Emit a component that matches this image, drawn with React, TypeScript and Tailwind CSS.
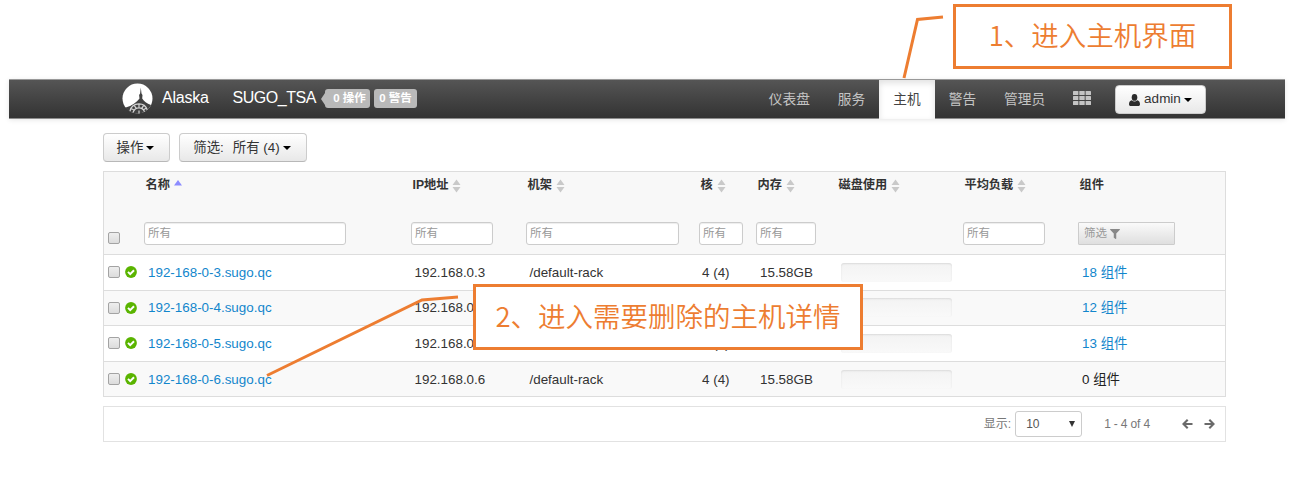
import React from "react";
import { FaFilter } from "react-icons/fa";

const hosts = [
  { name: "192-168-0-3.sugo.qc", ip: "192.168.0.3", count: 18 },
  { name: "192-168-0-4.sugo.qc", ip: "192.168.0.4", count: 12 },
  { name: "192-168-0-5.sugo.qc", ip: "192.168.0.5", count: 13 },
  { name: "192-168-0-6.sugo.qc", ip: "192.168.0.6", count: 0 },
];

const columns = [
  { label: "名称", input: "w-[202px]" },
  { label: "IP地址", input: "w-[82px]" },
  { label: "机架", input: "w-[153px]" },
  { label: "核", input: "w-[44px]" },
  { label: "内存", input: "w-[60px]" },
  { label: "磁盘使用", input: "" },
  { label: "平均负载", input: "w-[82px]" },
  { label: "组件", input: "" },
];

const gridCols =
  "grid grid-cols-[40px_267px_115px_173px_57px_81px_126px_115px_1fr]";

function Caret() {
  return (
    <svg width="8" height="4" viewBox="0 0 8 4" className="ml-[3px]">
      <path d="M0 0h8L4 4z" fill="#000" />
    </svg>
  );
}

function SortIcon({ active }: { active: boolean }) {
  return active ? (
    <svg width="8" height="14" viewBox="0 0 8 14" className="ml-1">
      <path d="M4 1l4 5.500H0z" fill="#8c8cff" />
    </svg>
  ) : (
    <svg width="9" height="14" viewBox="0 0 9 14" className="ml-1">
      <path d="M4.500 0.500l4 5.500h-8zM4.500 13.500l4-5.500h-8z" fill="#c9c9c9" />
    </svg>
  );
}

function Checkbox() {
  return (
    <span className="block h-3 w-3 rounded-[2px] border border-[#a3a3a3] bg-linear-to-b from-[#eeeeee] to-[#dcdcdc]" />
  );
}

function CheckCircle() {
  return (
    <svg width="12" height="12" viewBox="0 0 12 12">
      <circle cx="6" cy="6" r="5.900" fill="#5ab400" />
      <path d="M3 5.900l2.200 2.200 3.800-3.800" fill="none" stroke="#fff" strokeWidth="2" />
    </svg>
  );
}

function UserIcon() {
  return (
    <svg width="11" height="12" viewBox="0 0 11 12" className="mr-1" fill="#2b2b2b">
      <ellipse cx="5.500" cy="3.400" rx="2.800" ry="3.400" />
      <path d="M2.800 6.300C1 6.800 0 8 0 10.200 0 11.300.7 12 1.700 12h7.600c1 0 1.700-.7 1.700-1.800 0-2.200-1-3.400-2.800-3.900-.8.800-1.700 1.200-2.700 1.200s-1.900-.4-2.700-1.200z" />
    </svg>
  );
}

function Arrow({ className }: { className: string }) {
  return (
    <svg width="11" height="10" viewBox="0 0 11 10" className={className} fill="none" stroke="#6a6a6a" strokeWidth="2.100">
      <path d="M10.500 5H2M5.700.8L1.500 5l4.200 4.200" />
    </svg>
  );
}

function Logo() {
  return (
    <svg width="31" height="31" viewBox="0 0 31 31">
      <circle cx="15.500" cy="15.500" r="15" fill="#fff" />
      <path
        d="M18.800 4.500l.7 6 1 1.500-.3 3.500c1.800 3 4.500 5 8.800 6.500-2 4-6 7.500-11 8.500-6 .8-11-1.500-14.300-6 6.300-1.800 11-5 13.800-9l-.4-3.500 1-1.500z"
        fill="#424242"
      />
      <path
        d="M8 28c1-4.500 4.500-7.200 9-7.200 4 0 7 2.200 8.200 6M11 29.500c1-3 3-4.700 6-4.700 2.700 0 4.700 1.500 5.500 4M17 20.500v4.300M12.200 22.300l2 3M21.700 22.300l-2 3M9 25.500l3 1.500M24.500 25l-3 1.700M17 27.500v3"
        fill="none"
        stroke="#d4d4d4"
        strokeWidth="1.200"
      />
      <path d="M3.500 24.500l4 4" stroke="#424242" strokeWidth="1" />
    </svg>
  );
}

function NavItem({ label }: { label: string }) {
  return (
    <span className="flex h-full items-center px-[13.900px] pt-[1px] text-[13.700px] text-[#c4c4c4]">
      {label}
    </span>
  );
}

function Navbar() {
  return (
    <header className="ml-[9px] flex h-10 w-[1276px] items-stretch border-y border-t-[#999] border-b-[#8c8c8c] bg-linear-to-b from-[#555] to-[#333] shadow-[0_1px_5px_rgba(0,0,0,0.1)]">
      <div className="flex flex-1 items-center pb-[2px] pl-[113px] text-[16px] text-white">
        <Logo />
        <span className="ml-[9px] tracking-[-0.250px]">Alaska</span>
        <span className="ml-[24px] tracking-[-0.450px]">SUGO_TSA</span>
        <div className="mt-[1px] ml-[5px] flex items-center text-[11.500px] leading-none font-bold">
          <svg width="4" height="12" viewBox="0 0 4 12">
            <path d="M4 0v12L0 6z" fill="#b9b9b9" />
          </svg>
          <span className="flex h-[19px] w-[45px] items-center justify-center rounded-[3px] bg-[#b9b9b9] pl-1 whitespace-nowrap">
            0 操作
          </span>
          <span className="ml-1 flex h-[19px] w-[43px] items-center justify-center rounded-[3px] bg-[#b9b9b9] whitespace-nowrap">
            0 警告
          </span>
        </div>
      </div>
      <nav className="flex h-[39px] items-stretch">
        <NavItem label="仪表盘" />
        <NavItem label="服务" />
        <span className="flex w-14 items-center justify-center bg-white pt-[1px] text-[13.700px] text-[#444] shadow-[inset_0_3px_6px_rgba(0,0,0,0.12)]">
          主机
        </span>
        <NavItem label="警告" />
        <NavItem label="管理员" />
        <span className="ml-[14px] flex items-center pb-[3px]">
          <svg width="18" height="14" viewBox="0 0 18 14" fill="#c4c4c4">
            {[0, 5, 10].map((y) =>
              [0, 6.300, 12.600].map((x) => (
                <rect key={`${x}-${y}`} x={x} y={y} width="5.400" height="4" rx="0.600" />
              )),
            )}
          </svg>
        </span>
        <button className="mt-[5px] mr-[79px] ml-6 flex h-[29px] w-[91px] items-center justify-center rounded-[4px] border border-[#ccc] bg-linear-to-b from-white to-[#e8e8e8] text-[13.500px] text-[#333]">
          <UserIcon />
          admin
          <Caret />
        </button>
      </nav>
    </header>
  );
}

function Toolbar() {
  const button =
    "flex h-[29px] items-center justify-center rounded-[4px] border border-[#ccc] border-b-[#b8b8b8] bg-linear-to-b from-white to-[#e8e8e8] text-[13.400px] text-[#333] whitespace-pre pr-[2px]";
  return (
    <div className="mt-[14px] ml-[103px] flex gap-[9px]">
      <button className={`${button} w-[67px]`}>
        <span className="pt-[2px]">操作</span>
        <Caret />
      </button>
      <button className={`${button} w-[128px]`}>
        <span className="mr-[9px] pt-[2px]">筛选:</span>
        <span className="pt-[2px]">所有 (4)</span>
        <Caret />
      </button>
    </div>
  );
}

function HostTable() {
  return (
    <section className="mt-[9px] ml-[103px] w-[1123px] border border-[#ddd] text-[13.400px] text-[#333]">
      <div className="flex h-[82px] flex-col bg-[#f8f8f8]">
        <div className={`${gridCols} h-[50px] text-[12.200px] font-bold`}>
          <span />
          {columns.map(({ label }, i) => (
            <span key={label} className="flex h-[27px] items-center pl-[1.500px] whitespace-nowrap">
              {label}
              {i < 7 && <SortIcon active={i === 0} />}
            </span>
          ))}
        </div>
        <div className={`${gridCols} text-[11.500px] text-[#999]`}>
          <span className="pt-[10px] pl-1">
            <Checkbox />
          </span>
          {columns.map(({ label, input }, i) => (
            <span key={label}>
              {input && (
                <span className={`${input} flex h-[23px] items-center rounded-[3px] border border-[#ccc] bg-white pl-[3px] shadow-[inset_0_1px_1px_rgba(0,0,0,0.075)]`}>
                  所有
                </span>
              )}
              {i === 7 && (
                <span className="flex h-[23px] w-[97px] items-center gap-[3px] rounded-[1px] border border-[#ccc] bg-linear-to-b from-[#fafafa] to-[#dfdfdf] pl-[5px]">
                  筛选
                  <FaFilter size={10} color="#888" />
                </span>
              )}
            </span>
          ))}
        </div>
      </div>
      {hosts.map(({ name, ip, count }) => (
        <div key={name} className={`${gridCols} h-[35.600px] items-center border-t border-[#ddd] odd:bg-[#f9f9f9]`}>
          <span className="flex items-center gap-[5px] pl-1">
            <Checkbox />
            <CheckCircle />
          </span>
          <span className="pt-[1px] pl-1 text-[#1286cc]">{name}</span>
          <span className="pt-[1px] pl-[3.500px]">{ip}</span>
          <span className="pt-[1px] pl-[3.500px]">/default-rack</span>
          <span className="pt-[1px] pl-[3px]">4 (4)</span>
          <span className="pt-[1px] pl-1">15.58GB</span>
          <span className="ml-1 h-[19px] w-[111px] rounded-[3px] bg-linear-to-b from-[#f3f3f3] to-[#f9f9f9] shadow-[inset_0_1px_2px_rgba(0,0,0,0.1)]" />
          <span />
          <span className={count > 0 ? "pt-[1px] pl-1 text-[#1286cc]" : "pt-[1px] pl-1 text-[#222]"}>
            {count} 组件
          </span>
        </div>
      ))}
    </section>
  );
}

function Pagination() {
  return (
    <footer className="mt-[9px] ml-[103px] flex h-9 w-[1123px] items-center justify-end border border-[#e2e2e2] pr-[10px] text-[12px] text-[#777]">
      <span>显示:</span>
      <span className="ml-1 flex h-[26px] w-[67px] items-center justify-between rounded-[3px] border border-[#ccc] pr-[6px] pl-[10px] text-[#555]">
        10
        <svg width="6" height="6" viewBox="0 0 6 6">
          <path d="M0 0h6L3 6z" fill="#333" />
        </svg>
      </span>
      <span className="ml-[22px] tracking-[-0.150px]">1 - 4 of 4</span>
      <Arrow className="ml-8" />
      <Arrow className="ml-[11px] rotate-180" />
    </footer>
  );
}

function Callouts() {
  const box =
    "absolute flex items-center justify-center border-[3px] border-[#ed7d31] bg-white pb-[3px] font-[350] whitespace-nowrap text-[27.500px] text-[#ed7d31] font-['Noto_Sans_CJK_SC',sans-serif]";
  return (
    <>
      <svg className="absolute top-0 left-0" width="1299" height="481" fill="none" stroke="#ed7d31" strokeWidth="3">
        <path d="M904 78L917.500 19.500L943 17" />
        <path d="M267 375.500L422 300L458 297" />
      </svg>
      <div className={`${box} top-1 left-[953px] h-[65px] w-[279px]`}>1、进入主机界面</div>
      <div className={`${box} top-[284px] left-[473px] h-[66px] w-[390px]`}>2、进入需要删除的主机详情</div>
    </>
  );
}

export default function App() {
  return (
    <main className="relative h-[481px] w-[1299px] overflow-hidden bg-white pt-[79px] font-['Liberation_Sans','Noto_Sans_CJK_SC',sans-serif]">
      <Navbar />
      <Toolbar />
      <HostTable />
      <Pagination />
      <Callouts />
    </main>
  );
}
